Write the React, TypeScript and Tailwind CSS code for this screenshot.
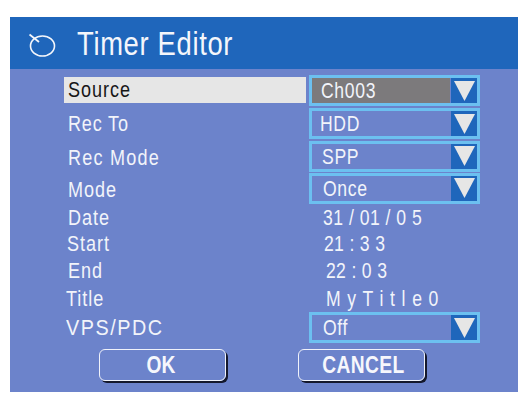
const font = { fontFamily: '"Liberation Sans", sans-serif' }

// no narrow face installed, so squeeze the text horizontally
function Narrow({ children, className = "" }: { children: React.ReactNode; className?: string }) {
  return <span className={`inline-block origin-left whitespace-pre ${className}`}>{children}</span>
}

function Arrow() {
  return (
    <div className="w-[26px] h-full bg-[#1f66bb] flex items-center justify-center shrink-0">
      <svg width="21" height="20" viewBox="0 0 21 20">
        <path d="M0 0 H21 L10.5 20 Z" fill="#e6e6e6" />
      </svg>
    </div>
  )
}

function Dropdown({ value, active, indent }: { value: string; active?: boolean; indent: string }) {
  return (
    <div className="w-[171px] h-[31px] border-[3px] border-[#6cc0f0] flex items-stretch">
      <div className={`flex-1 flex items-center text-[22px] text-[#f2f4fa] ${indent} ${active ? "bg-[#7c7a7c] mr-[1px]" : ""}`}>
        <Narrow className="scale-x-[0.8] tracking-[0.8px]">{value}</Narrow>
      </div>
      <Arrow />
    </div>
  )
}

function Row({ label, height, children, active, labelClass = "pl-[4px]", squeeze = "scale-x-[0.82] tracking-[1.2px]" }: {
  label: string
  height: string
  children: React.ReactNode
  active?: boolean
  labelClass?: string
  squeeze?: string
}) {
  return (
    <div className={`flex items-center ${height}`}>
      <div className={`w-[242px] h-[26px] flex items-center text-[22px] ${labelClass} ${active ? "bg-[#e6e6e6] text-[#161616] mb-[2px]" : "text-[#f2f4fa]"}`}>
        <Narrow className={squeeze}>{label}</Narrow>
      </div>
      <div className="ml-[3px]">{children}</div>
    </div>
  )
}

function Value({ children, indent, tracking }: { children: string; indent: string; tracking: string }) {
  return (
    <div className={`text-[22px] text-[#f2f4fa] ${indent}`}>
      <Narrow className={`scale-x-[0.8] ${tracking}`}>{children}</Narrow>
    </div>
  )
}

function Button({ label, textClass }: { label: string; textClass: string }) {
  return (
    <div className="w-[127px] h-[32px] rounded-[6px] border-[1.5px] border-[#f0f2fa] shadow-[2px_2px_0_#14182c] flex items-center justify-center font-bold text-[#f6f7fc]">
      <span className={`inline-block scale-x-[0.8] ${textClass}`}>{label}</span>
    </div>
  )
}

export default function App() {
  return (
    <div className="w-[528px] h-[403px] bg-white pt-[17px] pl-[10px]" style={font}>
      <div className="w-[508px] h-[375px] bg-[#6c83cb] flex flex-col">
        <div className="h-[52px] bg-[#1f66bb] flex items-center pl-[19px]">
          <svg width="28" height="28" viewBox="0 0 28 28" className="shrink-0">
            <ellipse cx="13.5" cy="17" rx="12" ry="10" fill="none" stroke="#f4f6fb" strokeWidth="1.6" />
            <path d="M0.5 5.5 L10 13" stroke="#f4f6fb" strokeWidth="1.8" fill="none" />
          </svg>
          <span className="ml-[20px] text-[33px] leading-none text-[#f4f6fb]">
            <Narrow className="scale-x-[0.83] tracking-[0.8px]">Timer Editor</Narrow>
          </span>
        </div>
        <div className="pt-[5px] pl-[54px] flex flex-col">
          <Row label="Source" height="h-[33px]" active>
            <Dropdown value="Ch003" active indent="pl-[9px]" />
          </Row>
          <Row label="Rec To" height="h-[33px]" labelClass="pl-[4px] mb-[1px]" squeeze="scale-x-[0.82] tracking-[1px]">
            <Dropdown value="HDD" indent="pl-[8px]" />
          </Row>
          <Row label="Rec Mode" height="h-[32px]" labelClass="pl-[4px] mt-[2px]" squeeze="scale-x-[0.82] tracking-[1.5px]">
            <Dropdown value="SPP" indent="pl-[10px]" />
          </Row>
          <Row label="Mode" height="h-[32px]" labelClass="pl-[4px] mt-[3px]">
            <Dropdown value="Once" indent="pl-[11px]" />
          </Row>
          <Row label="Date" height="h-[26px]">
            <Value indent="pl-[14px]" tracking="tracking-[0.6px]">31 / 01 / 0 5</Value>
          </Row>
          <Row label="Start" height="h-[26px]" labelClass="pl-[3px]">
            <Value indent="pl-[15px]" tracking="tracking-[0.4px]">21 : 3 3</Value>
          </Row>
          <Row label="End" height="h-[28px]">
            <Value indent="pl-[17px]" tracking="tracking-[0.4px]">22 : 0 3</Value>
          </Row>
          <Row label="Title" height="h-[28px]" labelClass="pl-[2px]">
            <Value indent="pl-[17px]" tracking="tracking-[1.1px]">M y T i t l e 0</Value>
          </Row>
          <Row label="VPS/PDC" height="h-[31px]" labelClass="pl-[2px]" squeeze="scale-x-[0.9] tracking-[1.7px]">
            <Dropdown value="Off" indent="pl-[11px]" />
          </Row>
        </div>
        <div className="mt-[6px] pl-[89px] flex gap-[72px]">
          <Button label="OK" textClass="text-[24px] -ml-[3px]" />
          <Button label="CANCEL" textClass="text-[24px] tracking-[0.5px] ml-[4px]" />
        </div>
      </div>
    </div>
  )
}
